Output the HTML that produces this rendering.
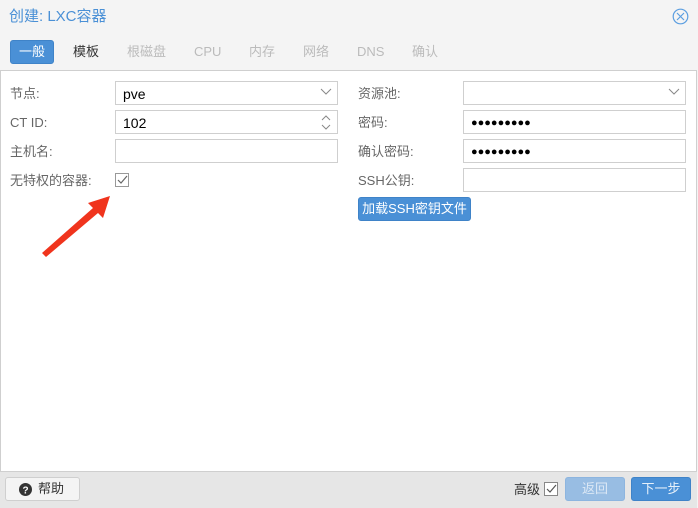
<!DOCTYPE html>
<html><head><meta charset="utf-8"><style>
*{box-sizing:border-box;margin:0;padding:0}
body{width:698px;height:508px;background:#f4f4f4;font-family:"Liberation Sans","Noto Sans CJK SC",sans-serif;font-size:13px;line-height:16px;position:relative;overflow:hidden;color:#333}
.a{position:absolute;white-space:nowrap}
.title{left:9px;top:8px;font-size:15px;line-height:18px;color:#4a90d6}
.tab{top:44px;font-size:13px;color:#bbb}
.panel{left:0;top:70px;width:697px;height:401px;background:#fff;border:1px solid #cfcfcf;border-bottom:none}
.lbl{color:#666;font-size:13px}
.inp{height:24px;border:1px solid #cfcfcf;background:#fff;font-size:14px;line-height:16px;color:#000;padding:4px 7px}
.foot{left:0;top:471px;width:697px;height:37px;background:#e6e6e6;border-top:1px solid #cfcfcf}
.btn{height:24px;border-radius:3px;text-align:center;line-height:22px;font-size:13px}
.dots{letter-spacing:0px;font-size:11px;padding-top:4px}
</style></head><body>
<div class="a title">创建: LXC容器</div>
<svg class="a" style="left:672px;top:8px" width="17" height="17"><circle cx="8.5" cy="8.5" r="7.3" fill="none" stroke="#5b9ee0" stroke-width="1.2"/><path d="M5 5L12 12M12 5L5 12" stroke="#5b9ee0" stroke-width="1.2"/></svg>
<div class="a btn" style="left:10px;top:40px;width:44px;background:#4a90d6;color:#fff;border:1px solid #3f83c8">一般</div>
<div class="a tab" style="left:73px;color:#333">模板</div>
<div class="a tab" style="left:127px">根磁盘</div>
<div class="a tab" style="left:194px">CPU</div>
<div class="a tab" style="left:249px">内存</div>
<div class="a tab" style="left:303px">网络</div>
<div class="a tab" style="left:357px">DNS</div>
<div class="a tab" style="left:412px">确认</div>
<div class="a panel"></div>
<div class="a lbl" style="left:10px;top:86px">节点:</div>
<div class="a lbl" style="left:10px;top:115px">CT ID:</div>
<div class="a lbl" style="left:10px;top:144px">主机名:</div>
<div class="a lbl" style="left:10px;top:173px">无特权的容器:</div>
<div class="a inp" style="left:115px;top:81px;width:223px">pve</div>
<svg class="a" style="left:320px;top:88px" width="12" height="8"><path d="M1 1L6 6L11 1" fill="none" stroke="#888"/></svg>
<div class="a inp" style="left:115px;top:110px;width:223px">102</div>
<svg class="a" style="left:320px;top:114px" width="12" height="17"><path d="M2 6L6 2L10 6M2 11L6 15L10 11" fill="none" stroke="#888"/></svg>
<div class="a inp" style="left:115px;top:139px;width:223px"></div>
<svg class="a" style="left:115px;top:173px" width="15" height="15"><rect x=".5" y=".5" width="13" height="13" fill="#fff" stroke="#999"/><path d="M3 7L6 10L12 3" fill="none" stroke="#666" stroke-width="1.2"/></svg>
<div class="a lbl" style="left:358px;top:86px">资源池:</div>
<div class="a lbl" style="left:358px;top:115px">密码:</div>
<div class="a lbl" style="left:358px;top:144px">确认密码:</div>
<div class="a lbl" style="left:358px;top:173px">SSH公钥:</div>
<div class="a inp" style="left:463px;top:81px;width:223px"></div>
<svg class="a" style="left:668px;top:88px" width="12" height="8"><path d="M1 1L6 6L11 1" fill="none" stroke="#888"/></svg>
<div class="a inp dots" style="left:463px;top:110px;width:223px">●●●●●●●●●</div>
<div class="a inp dots" style="left:463px;top:139px;width:223px">●●●●●●●●●</div>
<div class="a inp" style="left:463px;top:168px;width:223px"></div>
<div class="a btn" style="left:358px;top:197px;width:113px;background:#4a90d6;color:#fff;border:1px solid #3f83c8">加载SSH密钥文件</div>
<svg class="a" style="left:0;top:0" width="698" height="508"><path d="M110 196L88 203L93 208L42 253L46 257L98 213L103 218Z" fill="#f0341d"/></svg>
<div class="a foot"></div>
<div class="a btn" style="left:5px;top:477px;width:75px;background:#f4f4f4;border:1px solid #cfcfcf;color:#333"></div>
<svg class="a" style="left:19px;top:483px" width="13" height="13"><circle cx="6.5" cy="6.5" r="6.5" fill="#333"/><text x="6.5" y="10.5" text-anchor="middle" fill="#fff" font-size="10" font-weight="bold" font-family="Liberation Sans">?</text></svg>
<div class="a" style="left:38px;top:481px;color:#333">帮助</div>
<div class="a" style="left:514px;top:482px;color:#333">高级</div>
<svg class="a" style="left:544px;top:482px" width="15" height="15"><rect x=".5" y=".5" width="13" height="13" fill="#fff" stroke="#888"/><path d="M3 7L6 10L12 3" fill="none" stroke="#555" stroke-width="1.2"/></svg>
<div class="a btn" style="left:565px;top:477px;width:60px;background:#98bde3;color:#dce8f5;border:1px solid #8db5df">返回</div>
<div class="a btn" style="left:631px;top:477px;width:60px;background:#4a90d6;color:#e6f0fa;border:1px solid #3f83c8">下一步</div>
</body></html>
